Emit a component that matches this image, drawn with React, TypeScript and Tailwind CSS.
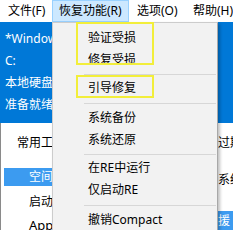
import React from 'react';

const font = { fontFamily: '"Noto Sans", "Noto Sans CJK SC", sans-serif' };

const MenuItem: React.FC<{ label: string }> = ({ label }) => (
  <div className="h-[22px] flex items-center pl-[35px] text-[12px] text-black whitespace-nowrap">{label}</div>
);

const Separator: React.FC<{ h: string }> = ({ h }) => (
  <div className={`${h} flex items-center pl-[31px] pr-[1px]`}>
    <div className="h-px w-full bg-[#d7d7d7]" />
  </div>
);

export default function App() {
  return (
    <div className="relative w-[233px] h-[230px] overflow-hidden bg-white" style={font}>
      {/* Menu bar */}
      <div className="h-[22px] flex items-center bg-white text-[12px] text-black whitespace-nowrap">
        <div className="pl-[8px] w-[52px]">文件(F)</div>
        <div className="h-[22px] w-[77px] flex items-center pl-[6px] bg-[#cce8ff] border border-[#99d1ff]">恢复功能(R)</div>
        <div className="pl-[8px] w-[64px]">选项(O)</div>
        <div>帮助(H)</div>
      </div>

      {/* Blue banner */}
      <div className="h-[101px] bg-[#0078d7] text-white text-[12px] pl-[5px] pt-[6px] whitespace-nowrap">
        <div className="h-[22px] flex items-center">*Windows 10</div>
        <div className="h-[22px] flex items-center">C:</div>
        <div className="h-[22px] flex items-center">本地硬盘</div>
        <div className="h-[22px] flex items-center">准备就绪</div>
      </div>

      {/* Content */}
      <div className="flex h-[107px]">
        <div className="w-[52px] border-l border-[#8a8a8a] text-[12px] text-black whitespace-nowrap">
          <div className="h-[20px] mt-[10px] flex items-center pl-[16px]">常用工具</div>
          <div className="h-[18px] mt-[15px] ml-[3px] flex items-center pl-[25px] bg-[#3c9bf0] text-white">空间</div>
          <div className="h-[20px] mt-[6px] flex items-center pl-[28px]">启动</div>
          <div className="h-[20px] mt-[4px] flex items-center pl-[28px] text-[13px]">AppX</div>
        </div>
        <div className="flex-1" />
        <div className="w-[15px] text-[12px] text-black whitespace-nowrap overflow-hidden">
          <div className="h-[20px] mt-[10px] flex items-center">过期</div>
          <div className="h-[20px] mt-[17px] flex items-center">系统</div>
          <div className="h-[20px] mt-[21px] flex items-center bg-[#3c9bf0] text-white">援</div>
        </div>
      </div>

      {/* Dropdown menu */}
      <div className="absolute left-[52px] top-[22px] w-[166px] h-[212px] bg-[#f2f2f2] border border-[#cccccc] border-r-[#a8a8a8] shadow-[2px_2px_3px_rgba(0,0,0,0.25)] pt-[4px]">
        <MenuItem label="验证受损" />
        <MenuItem label="修复受损" />
        <Separator h="h-[6px]" />
        <MenuItem label="引导修复" />
        <Separator h="h-[8px]" />
        <MenuItem label="系统备份" />
        <MenuItem label="系统还原" />
        <Separator h="h-[6px]" />
        <MenuItem label="在RE中运行" />
        <MenuItem label="仅启动RE" />
        <Separator h="h-[8px]" />
        <MenuItem label="撤销Compact" />
      </div>

      {/* Annotation boxes */}
      <div className="absolute left-[76px] top-[22px] w-[78px] h-[43px] border-2 border-[#f2ee3a]" />
      <div className="absolute left-[76px] top-[75px] w-[78px] h-[23px] border-2 border-[#f2ee3a]" />
    </div>
  );
}
